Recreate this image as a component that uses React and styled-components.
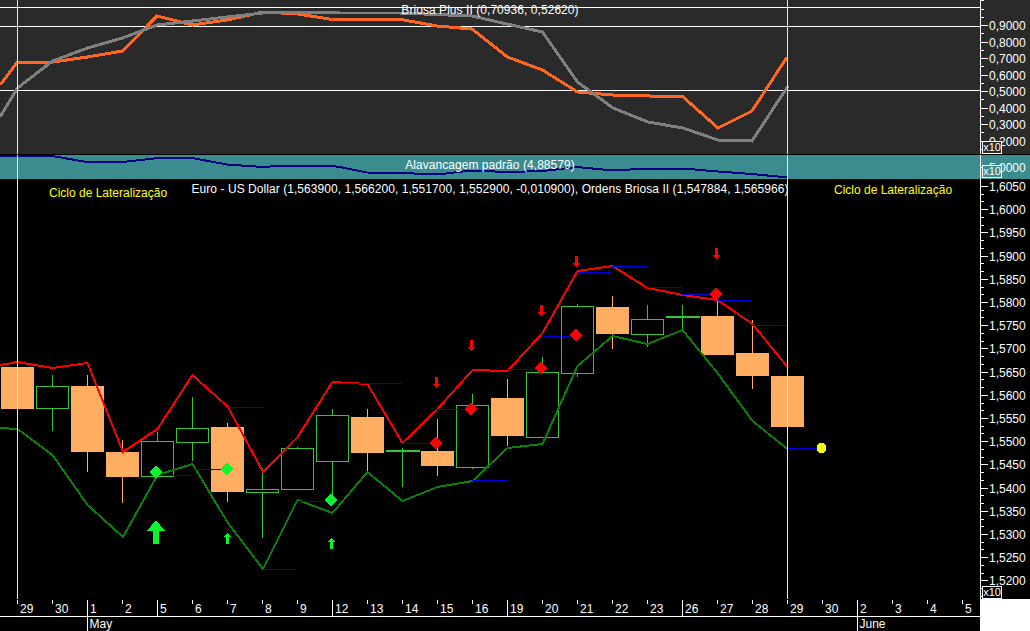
import React from "react";
import styled, { createGlobalStyle } from "styled-components";

const GREEN = "#35c435";
const PEACH = "#ffad60";
const LIME = "#0cf52a";
const CURSORS = [17.5, 787.5];

const tickX = (i) => 17.5 + 35 * i;
const toPoints = (list) => list.map(([x, y]) => `${x},${y}`).join(" ");

// body: [open/top, bottom], wick: [top, bottom]
const candles = [
  { i: 0, up: false, body: [367, 409], wick: [367, 409] },
  { i: 1, up: true, body: [386, 408], wick: [375, 431] },
  { i: 2, up: false, body: [386, 452], wick: [375, 472] },
  { i: 3, up: false, body: [452, 477], wick: [440, 503] },
  { i: 4, up: true, body: [441, 476], wick: [432, 476] },
  { i: 5, up: true, body: [428, 442], wick: [397, 461] },
  { i: 6, up: false, body: [427, 492], wick: [423, 502] },
  { i: 7, up: true, body: [489, 492], wick: [468, 538] },
  { i: 8, up: true, body: [448, 489], wick: [447, 489] },
  { i: 9, up: true, body: [415, 461], wick: [409, 500] },
  { i: 10, up: false, body: [417, 453], wick: [409, 471] },
  { i: 11, up: true, doji: true, body: [450, 452], wick: [448, 487] },
  { i: 12, up: false, body: [451, 466], wick: [419, 476] },
  { i: 13, up: true, body: [405, 467], wick: [394, 469] },
  { i: 14, up: false, body: [398, 436], wick: [379, 446] },
  { i: 15, up: true, body: [372, 437], wick: [357, 437] },
  { i: 16, up: true, body: [306, 373], wick: [304, 377] },
  { i: 17, up: false, body: [307, 334], wick: [296, 349] },
  { i: 18, up: true, body: [319, 334], wick: [305, 347] },
  { i: 19, up: true, doji: true, body: [316, 318], wick: [305, 329] },
  { i: 20, up: false, body: [316, 355], wick: [300, 355] },
  { i: 21, up: false, body: [353, 376], wick: [320, 389] },
  { i: 22, up: false, body: [376, 427], wick: [376, 427] },
];

const redLine = [
  [0, 365], [17.5, 362], [52.5, 368], [87.5, 363], [123, 452], [157.5, 429],
  [192.5, 375], [228, 407], [263, 472], [297.5, 437], [332.5, 382], [367.5, 384],
  [402.5, 443], [437.5, 409], [472.5, 370], [507.5, 371], [542.5, 333], [577.5, 271],
  [612.5, 266], [647.5, 288], [682.5, 295], [717.5, 300], [752.5, 324], [787.5, 367],
];

const greenLine = [
  [0, 428], [17.5, 429], [52.5, 455], [87.5, 505], [123, 537], [157.5, 475],
  [192.5, 464], [228, 523], [263, 569], [297.5, 500], [332.5, 513], [367.5, 472],
  [402.5, 501], [437.5, 487], [472.5, 481], [507.5, 448], [542.5, 444], [577.5, 366],
  [612.5, 336], [647.5, 344], [682.5, 330], [717.5, 373], [752.5, 421], [787.5, 449],
];

// x1, x2, y
const stops = [
  [228, 263, 407], [158, 192, 475], [192, 225, 469], [263, 297, 569], [297, 330, 501],
  [332, 402, 383], [402, 430, 443], [437, 467, 409], [472, 507, 480], [507, 537, 369],
  [543, 570, 336], [577, 612, 272], [612, 647, 266], [647, 682, 287], [682, 710, 294],
  [717, 752, 300], [752, 787, 325], [787, 819, 448],
];

const diamonds = [
  [156, 472, LIME], [227, 469, LIME], [331, 500, LIME],
  [436, 443, "#ff0000"], [471, 409, "#ff0000"], [541, 368, "#ff0000"],
  [576, 335, "#ff0000"], [716, 294, "#ff0000"],
];

const upArrows = [[227.5, 533], [331.5, 538]];
const downArrows = [[436.5, 377], [471.5, 340], [541.5, 305], [576.5, 256], [716.5, 248]];

const orangeLine = [
  [0, 85], [17.5, 62], [52.5, 62], [87.5, 57], [122.5, 51], [157, 16], [192.5, 25],
  [227, 20], [263, 12], [298, 14], [332.5, 19.5], [367.5, 19.5], [401, 19.5], [437, 26],
  [472, 29], [507.5, 57], [542.5, 70], [577.5, 92], [613, 95], [650, 96], [682, 96],
  [718, 128], [752, 111], [787, 57],
];

const greyLine = [
  [0, 117], [17.5, 88], [52.5, 61], [87.5, 48], [122.5, 38], [157, 25], [192.5, 21],
  [227, 17], [263, 13], [298, 12.5], [340, 13], [400, 13], [472, 16], [507, 24],
  [542.5, 32], [577.5, 82], [613, 108], [648, 122], [683, 128], [718, 140], [752, 141], [788, 86],
];

const navyLine = [
  [0, 156], [52, 156], [87, 162], [123, 162], [158, 158], [192, 158], [227, 164.5],
  [263, 167], [283, 165.5], [327, 165.5], [340, 167], [367, 172.5], [402, 173], [437, 174.5],
  [472, 170.5], [507, 172], [543, 171], [577, 167], [613, 170.5], [648, 168.5], [683, 168.5],
  [718, 171.5], [752, 174], [788, 177.5],
];

const days = [
  "29", "30", "1", "2", "5", "6", "7", "8", "9", "12", "13", "14", "15", "16",
  "19", "20", "21", "22", "23", "26", "27", "28", "29", "30", "2", "3", "4", "5",
];
const weekStarts = [4, 9, 14, 19];
const monthStarts = [
  { i: 2, name: "May" },
  { i: 24, name: "June" },
];

const topLabels = ["0,9000", "0,8000", "0,7000", "0,6000", "0,5000", "0,4000", "0,3000", "0,2000"];
const mainLabels = [
  "1,6050", "1,6000", "1,5950", "1,5900", "1,5850", "1,5800", "1,5750", "1,5700", "1,5650",
  "1,5600", "1,5550", "1,5500", "1,5450", "1,5400", "1,5350", "1,5300", "1,5250", "1,5200",
];

function Cursors({ y1, y2 }) {
  return CURSORS.map((x) => (
    <line key={x} x1={x} x2={x} y1={y1} y2={y2} stroke="#ffff33" />
  ));
}

function Candle({ i, up, doji, body, wick }) {
  const x = tickX(i);
  const color = up ? GREEN : PEACH;
  return (
    <g>
      <line x1={x} x2={x} y1={wick[0]} y2={wick[1]} stroke={color} />
      {doji ? (
        <rect x={x - 17} y={body[0]} width={34} height={2} fill={color} />
      ) : up ? (
        <rect x={x - 16} y={body[0] + 0.5} width={32} height={body[1] - body[0]} fill="#000" stroke={color} />
      ) : (
        <rect x={x - 16.5} y={body[0]} width={33} height={body[1] - body[0]} fill={color} />
      )}
    </g>
  );
}

function Diamond({ x, y, color }) {
  return <polygon points={toPoints([[x, y - 7], [x + 6.5, y], [x, y + 7], [x - 6.5, y]])} fill={color} />;
}

function Arrow({ x, tail, dir = -1, len = 11, head = 4, half = 4, shaft = 1.5, color }) {
  const tip = tail + dir * len;
  const neck = tip - dir * head;
  return (
    <polygon
      fill={color}
      points={toPoints([
        [x, tip], [x + half, neck], [x + shaft, neck], [x + shaft, tail],
        [x - shaft, tail], [x - shaft, neck], [x - half, neck],
      ])}
    />
  );
}

function ValueScale({ y, height, labels, first, step, minors }) {
  const sub = step / (minors + 1);
  const marks = [];
  for (let v = first - sub; v > y; v -= sub) marks.push(v);
  for (let v = first; v < y + height; v += sub) marks.push(v);
  return (
    <ScaleSvg viewBox={`981 ${y} 49 ${height}`}>
      {marks.map((v) => {
        const major = Math.abs((v - first) / step - Math.round((v - first) / step)) < 0.01 && v >= first;
        return <line key={v} x1={981} x2={major ? 988 : 984} y1={v} y2={v} stroke="#fff" />;
      })}
      {labels.map((text, k) => (
        <ScaleText key={k} x={989} y={first + step * k + 4.5}>
          {text}
        </ScaleText>
      ))}
    </ScaleSvg>
  );
}

export default function App() {
  return (
    <>
      <GlobalStyle />
      <Chart>
        <Pane $height={155} $bg="#2a2a2a" $divider>
          <Plot>
            <PlotSvg viewBox="0 0 980 154">
              {[7, 26, 90].map((y) => (
                <line key={y} x1={0} x2={980} y1={y + 0.5} y2={y + 0.5} stroke="#fff" />
              ))}
              <polyline points={toPoints(orangeLine)} fill="none" stroke="#ff6622" strokeWidth={3} />
              <polyline points={toPoints(greyLine)} fill="none" stroke="#808080" strokeWidth={3} />
              <Cursors y1={0} y2={154} />
            </PlotSvg>
            <PaneTitle $top={3}>Briosa Plus II (0,70936, 0,52620)</PaneTitle>
          </Plot>
          <Scale>
            <ValueScale y={0} height={154} labels={topLabels} first={25.5} step={16.5} minors={1} />
            <ScaleBadge $bottom={0} $bg="#2a2a2a">x10</ScaleBadge>
          </Scale>
        </Pane>

        <Pane $height={24} $bg="#3a8c8f">
          <Plot>
            <PlotSvg viewBox="0 155 980 24">
              <polyline points={toPoints(navyLine)} fill="none" stroke="#000080" strokeWidth={2} />
              <Cursors y1={155} y2={179} />
            </PlotSvg>
            <PaneTitle $top={3}>Alavancagem padrão (4,88579)</PaneTitle>
          </Plot>
          <Scale>
            <ValueScale y={155} height={24} labels={["5,0000"]} first={167} step={24} minors={0} />
            <ScaleBadge $bottom={1} $bg="#3a8c8f">x10</ScaleBadge>
          </Scale>
        </Pane>

        <Pane $height={420} $bg="#000">
          <Plot>
            <PlotSvg viewBox="0 179 980 420">
              {candles.map((c) => (
                <Candle key={c.i} {...c} />
              ))}
              <polyline points={toPoints(greenLine)} fill="none" stroke="#0a7f0a" strokeWidth={2} />
              <polyline points={toPoints(redLine)} fill="none" stroke="#ff0000" strokeWidth={2} />
              {stops.map(([x1, x2, y]) => (
                <line key={`${x1}-${y}`} x1={x1} x2={x2} y1={y + 0.5} y2={y + 0.5} stroke="#0000e0" />
              ))}
              {diamonds.map(([x, y, color]) => (
                <Diamond key={x} x={x} y={y} color={color} />
              ))}
              <Arrow x={156} tail={544} len={24} head={11} half={9} shaft={3} color={LIME} />
              {upArrows.map(([x, top]) => (
                <Arrow key={x} x={x} tail={top + 11} color={LIME} />
              ))}
              {downArrows.map(([x, top]) => (
                <Arrow key={x} x={x} tail={top} dir={1} color="#ff0000" />
              ))}
              <circle cx={821.5} cy={448} r={5} fill="#ffff00" />
              <Cursors y1={179} y2={599} />
            </PlotSvg>
            <PaneTitle $top={3}>
              Euro - US Dollar (1,563900, 1,566200, 1,551700, 1,552900, -0,010900), Ordens Briosa II (1,547884, 1,565966)
            </PaneTitle>
            <CycleNote $left={49} $top={7}>Ciclo de Lateralização</CycleNote>
            <CycleNote $left={834} $top={4}>Ciclo de Lateralização</CycleNote>
          </Plot>
          <Scale>
            <ValueScale y={179} height={420} labels={mainLabels} first={186.5} step={23.2} minors={2} />
            <ScaleBadge $bottom={0} $bg="#000">x10</ScaleBadge>
          </Scale>
        </Pane>

        <TimeRow>
          <TimeAxis viewBox="0 599 980 32">
            <line x1={0} x2={980} y1={616.5} y2={616.5} stroke="#fff" />
            {days.map((day, i) => {
              const x = tickX(i);
              const month = monthStarts.find((m) => m.i === i);
              const bottom = month ? 631 : weekStarts.includes(i) ? 616 : 604;
              return (
                <g key={i}>
                  <line x1={x} x2={x} y1={600} y2={bottom} stroke="#fff" />
                  <ScaleText x={x + 2.5} y={613}>
                    {day}
                  </ScaleText>
                  {month && (
                    <ScaleText x={x + 2} y={628}>
                      {month.name}
                    </ScaleText>
                  )}
                </g>
              );
            })}
          </TimeAxis>
          <Corner />
        </TimeRow>
      </Chart>
    </>
  );
}

const GlobalStyle = createGlobalStyle`
  html, body {
    margin: 0;
    background: #000;
    overflow: hidden;
  }
  body {
    font: 12px "Liberation Sans", Arial, sans-serif;
    color: #fff;
  }
`;

const Chart = styled.div`
  width: 1030px;
  height: 631px;
  display: flex;
  flex-direction: column;
`;

const Pane = styled.section`
  display: flex;
  flex: none;
  height: ${(p) => p.$height}px;
  background: ${(p) => p.$bg};
  box-sizing: border-box;
  border-bottom: ${(p) => (p.$divider ? "1px solid #000" : "none")};
`;

const Plot = styled.div`
  position: relative;
  width: 980px;
  height: 100%;
`;

const PlotSvg = styled.svg`
  display: block;
  width: 980px;
  height: 100%;
  shape-rendering: crispEdges;
`;

const PaneTitle = styled.div`
  position: absolute;
  left: 0;
  right: 0;
  top: ${(p) => p.$top}px;
  text-align: center;
  line-height: 14px;
  letter-spacing: 0.055px;
  white-space: nowrap;
`;

const CycleNote = styled.div`
  position: absolute;
  left: ${(p) => p.$left}px;
  top: ${(p) => p.$top}px;
  color: #ffff00;
  line-height: 14px;
  white-space: nowrap;
`;

const Scale = styled.div`
  position: relative;
  width: 50px;
  height: 100%;
  box-sizing: border-box;
  border-left: 1px solid #fff;
  overflow: hidden;
`;

const ScaleSvg = styled.svg`
  display: block;
  width: 49px;
  height: 100%;
  shape-rendering: crispEdges;
`;

const ScaleText = styled.text`
  fill: #fff;
  font-size: 12px;
  font-family: "Liberation Sans", Arial, sans-serif;
`;

const ScaleBadge = styled.div`
  position: absolute;
  left: 1px;
  bottom: ${(p) => p.$bottom}px;
  width: 18px;
  height: 11px;
  border: 1px solid #fff;
  background: ${(p) => p.$bg};
  font-size: 11px;
  line-height: 11px;
  text-align: center;
`;

const TimeRow = styled.div`
  display: flex;
  flex: none;
  height: 32px;
`;

const TimeAxis = styled.svg`
  display: block;
  width: 980px;
  height: 32px;
  shape-rendering: crispEdges;
`;

const Corner = styled.div`
  width: 50px;
  background: #fff;
`;
